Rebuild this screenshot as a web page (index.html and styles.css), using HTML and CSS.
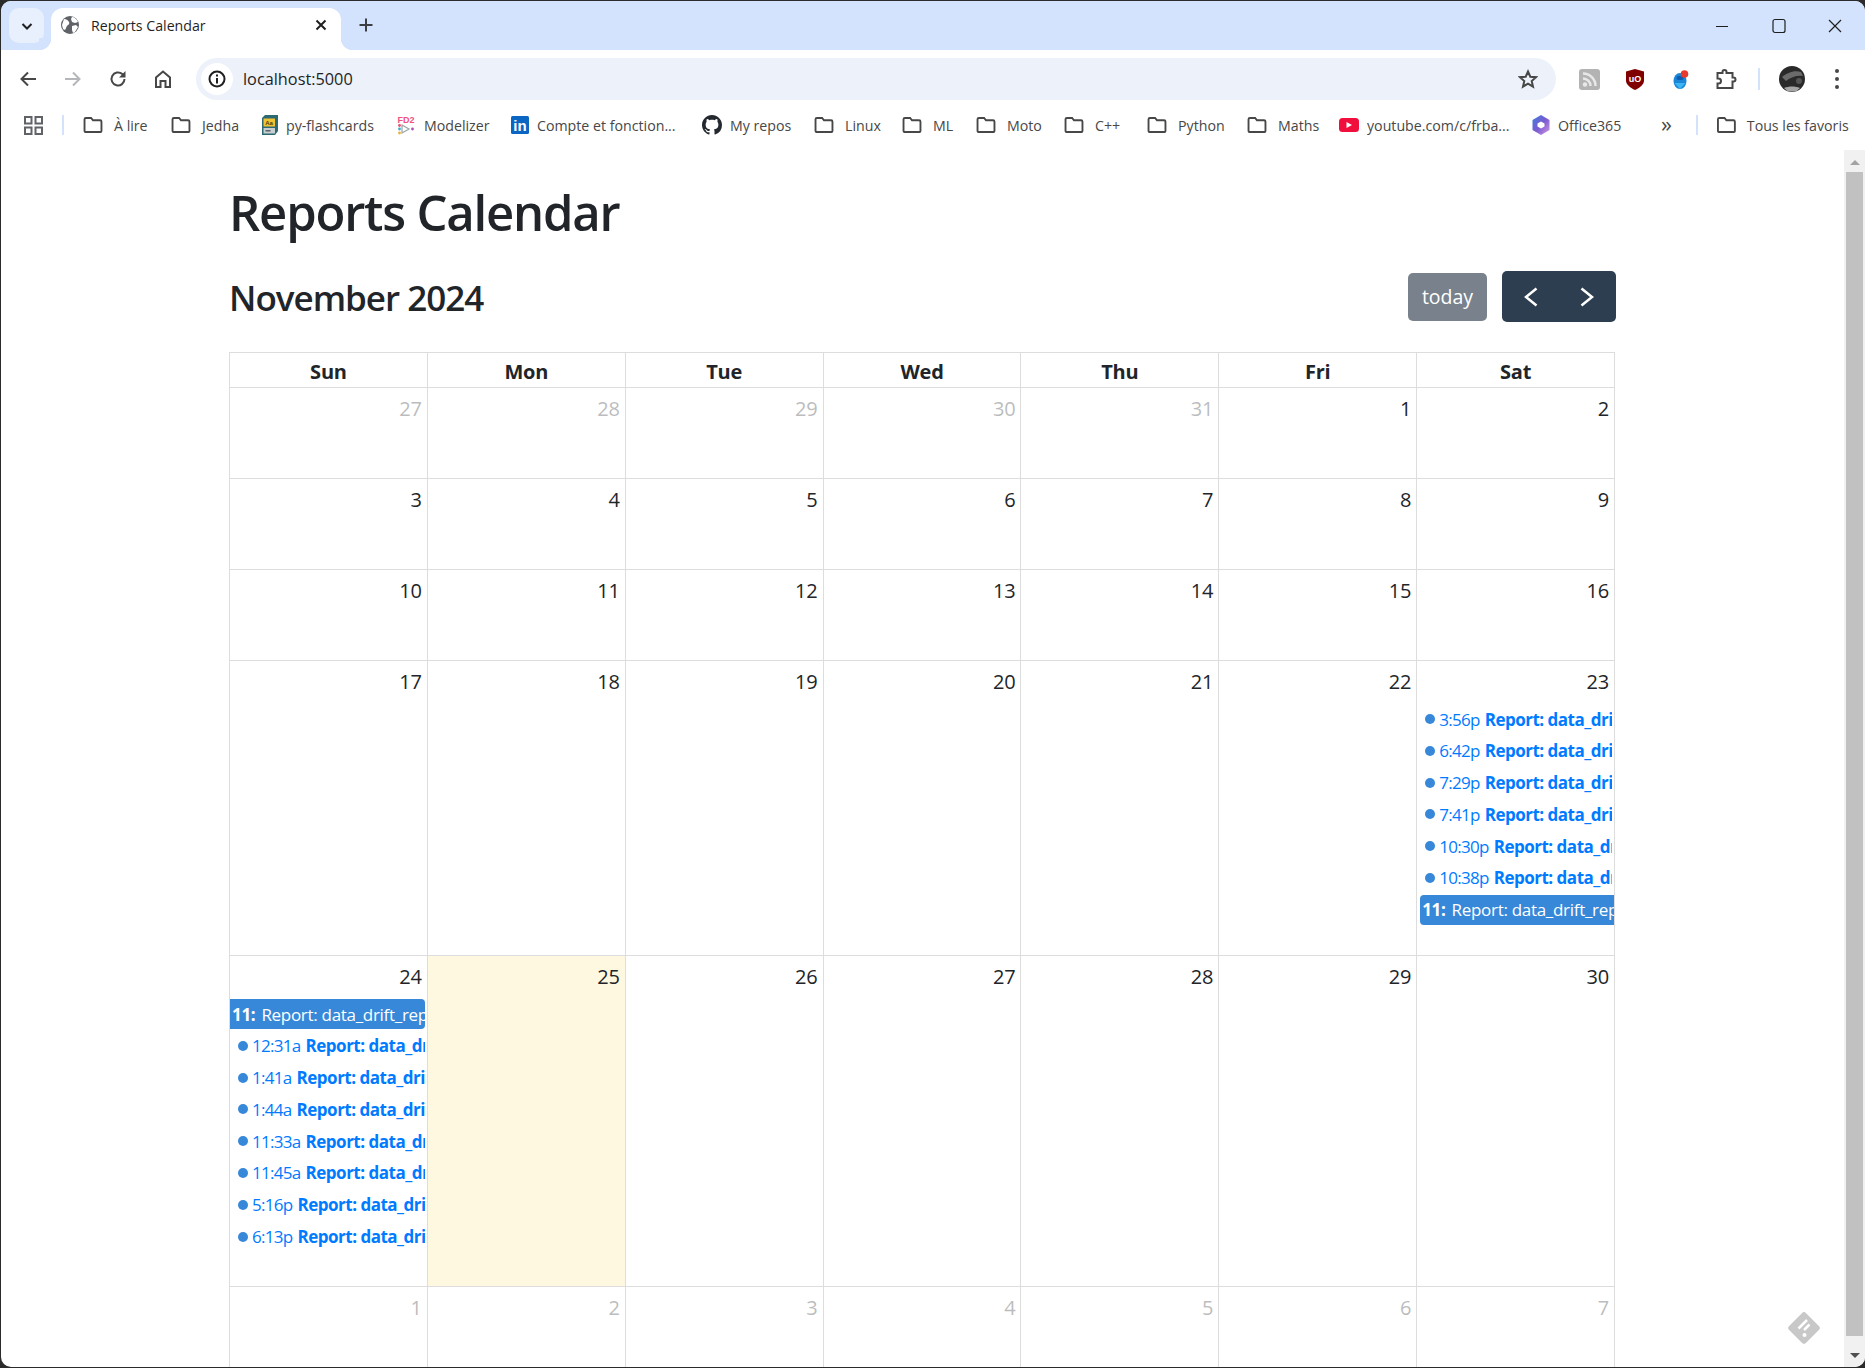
FILE: index.html
```html
<!DOCTYPE html>
<html lang="en">
<head>
    <meta charset="UTF-8">
    <title>Reports Calendar</title>
    <link rel="stylesheet" href="styles.css">
</head>
<body>
<div class="window">
    <div class="tabstrip">
        <button class="tab-search">
            <svg width="14" height="14" viewBox="0 0 14 14"><path d="M2.5 5l4.5 4.5L11.500 5" fill="none" stroke="#1f1f1f" stroke-width="2"/></svg>
        </button>
        <div class="tab">
            <svg class="tab-icon" width="18" height="18" viewBox="0 0 18 18"><circle cx="9" cy="9" r="9" fill="#5f6368"/><path d="M3 3c2 0 4 1 5 3s-1 3-2 4-1 3-2 4l-2-1-1-4zM11 1c2 0 5 2 6 5l-3 1-3-1-1-3zM11 10l4-1 2 2-3 5-2 1-1-3z" fill="#fff"/></svg>
            <span class="tab-title">Reports Calendar</span>
            <svg class="tab-close" width="14" height="14" viewBox="0 0 14 14"><path d="M2.500 2.500l9 9M11.500 2.500l-9 9" stroke="#1f1f1f" stroke-width="2"/></svg>
        </div>
        <svg class="new-tab" width="16" height="16" viewBox="0 0 16 16"><path d="M8 1.500v13M1.500 8h13" stroke="#3c4043" stroke-width="2"/></svg>
        <div class="window-controls">
            <svg width="14" height="14" viewBox="0 0 14 14"><path d="M1 7.500h12" stroke="#1f1f1f" stroke-width="1.200"/></svg>
            <svg width="14" height="16" viewBox="0 0 14 16"><rect x="1" y="1.500" width="12" height="13" rx="2" fill="none" stroke="#1f1f1f" stroke-width="1.200"/></svg>
            <svg width="14" height="14" viewBox="0 0 14 14"><path d="M1 1l12 12M13 1L1 13" stroke="#1f1f1f" stroke-width="1.200"/></svg>
        </div>
    </div>

    <div class="toolbar">
        <svg class="nav-icon" width="18" height="18" viewBox="0 0 18 18"><path d="M17 9H3M9 2.500L2.500 9 9 15.500" fill="none" stroke="#474747" stroke-width="2"/></svg>
        <svg class="nav-icon" width="18" height="18" viewBox="0 0 18 18"><path d="M1 9h14M9 2.500L15.500 9 9 15.500" fill="none" stroke="#b4b6b9" stroke-width="2"/></svg>
        <svg class="nav-icon" width="18" height="18" viewBox="0 0 18 18"><path d="M15.500 9A6.500 6.500 0 1 1 13.300 4.100L15.500 6" fill="none" stroke="#474747" stroke-width="2"/><path d="M16.500 1v6.500H10z" fill="#474747"/></svg>
        <svg class="nav-icon" width="18" height="18" viewBox="0 0 18 18"><path d="M2 17V7.500L9 1.500l7 6V17h-4.500v-6h-5v6z" fill="none" stroke="#474747" stroke-width="2"/></svg>
        <div class="omnibox">
            <span class="site-info">
                <svg width="18" height="18" viewBox="0 0 18 18"><circle cx="9" cy="9" r="7.500" fill="none" stroke="#1f1f1f" stroke-width="2"/><path d="M9 8v5.500M9 4.500v2" stroke="#1f1f1f" stroke-width="2"/></svg>
            </span>
            <span class="url">localhost:5000</span>
            <svg class="star" width="20" height="20" viewBox="0 0 20 20"><path d="M10 2.500l2.300 5.200 5.700.5-4.300 3.800 1.300 5.600-5-3-5 3 1.300-5.600L2 8.200l5.700-.5z" fill="none" stroke="#474747" stroke-width="2"/></svg>
        </div>
        <div class="extensions">
            <svg width="21" height="21" viewBox="0 0 21 21"><rect width="21" height="21" rx="3" fill="#b3b3b3"/><circle cx="6" cy="15.500" r="2.200" fill="#e8e8e8"/><path d="M4 9.500a7.500 7.500 0 0 1 7.500 7.500M4 4.500a12.500 12.500 0 0 1 12.500 12.500" fill="none" stroke="#e8e8e8" stroke-width="2.500"/></svg>
            <svg width="18" height="21" viewBox="0 0 18 21"><path d="M9 0l9 2.500v9c0 4-4.500 7.500-9 9.500-4.500-2-9-5.500-9-9.500v-9z" fill="#800000"/><text class="ublock-text" x="9" y="12.500" text-anchor="middle">uO</text></svg>
            <svg width="16" height="19" viewBox="0 0 16 19"><ellipse cx="7" cy="11" rx="6.500" ry="8" fill="#1a86d8"/><rect x="3.500" y="6" width="7" height="4" rx="2" fill="#0b5db0"/><path d="M1.500 13h11l-5.500 6z" fill="#3db5f2"/><circle cx="11.500" cy="4" r="3.800" fill="#e8392f"/></svg>
            <svg class="puzzle" width="21" height="20" viewBox="0 0 21 20"><path d="M1.500 4h5V3a2 2 0 0 1 4 0v1h6v4.500h1a2 2 0 0 1 0 4h-1V19h-15v-4.500h1a2.500 2.500 0 0 0 0-5h-1z" fill="none" stroke="#474747" stroke-width="2"/></svg>
        </div>
        <span class="toolbar-sep"></span>
        <svg class="avatar" width="26" height="26" viewBox="0 0 26 26"><circle cx="13" cy="13" r="13" fill="#2a2a2a"/><path d="M3 11c5-4 12-7 19-5l2 4c-6-1-12 1-17 5z" fill="#6b6b6b"/><path d="M5 22c5-2 11-2 16 0l-4 3.500H9z" fill="#a5a5a5"/><circle cx="20" cy="15" r="3" fill="#555"/></svg>
        <span class="kebab"><i></i><i></i><i></i></span>
    </div>

    <div class="bookmarks">
        <span class="bm"><svg width="19" height="19" viewBox="0 0 19 19"><g fill="none" stroke="#5f6368" stroke-width="2"><rect x="1" y="1" width="6.500" height="6.500"/><rect x="11.500" y="1" width="6.500" height="6.500"/><rect x="1" y="11.500" width="6.500" height="6.500"/><rect x="11.500" y="11.500" width="6.500" height="6.500"/></g></svg></span>
        <span class="bm-sep"></span>
        <span class="bm"><svg class="folder" viewBox="0 0 20 17"><use href="#folder-shape"/></svg>À lire</span>
        <span class="bm"><svg class="folder" viewBox="0 0 20 17"><use href="#folder-shape"/></svg>Jedha</span>
        <span class="bm bm-tight"><svg width="16" height="20" viewBox="0 0 16 20"><path d="M0 3L3 0h13v16l-3 4H0z" fill="#2b6a72"/><rect x="1.500" y="3.500" width="11.500" height="8" fill="#f2c230"/><text class="flash-text" x="7" y="10">Aa</text><rect x="1.500" y="13" width="11.500" height="5.500" fill="#c9ced1"/><rect x="3.500" y="15" width="5" height="1.500" fill="#5a6468"/></svg>py-flashcards</span>
        <span class="bm bm-tight"><svg width="20" height="20" viewBox="0 0 20 20"><text class="fd2-text" x="10" y="7.500" text-anchor="middle">FD2</text><g><path d="M6 10l7 4-7 4z" fill="none" stroke="#9aa5a8" stroke-width="1.200"/><circle cx="3.500" cy="10.500" r="1.400" fill="#e4526d"/><circle cx="3.500" cy="14" r="1.400" fill="#43a9c4"/><circle cx="3.500" cy="18" r="1.400" fill="#e8b33c"/><circle cx="16.500" cy="14" r="1.400" fill="#b04fb5"/></g></svg>Modelizer</span>
        <span class="bm bm-tight"><svg width="18" height="18" viewBox="0 0 18 18"><rect width="18" height="18" rx="1.500" fill="#0a66c2"/><text class="linkedin-text" x="9" y="15" text-anchor="middle">in</text></svg>Compte et fonction...</span>
        <span class="bm bm-tight"><svg width="20" height="20" viewBox="0 0 16 16"><path fill="#24292f" d="M8 0C3.580 0 0 3.580 0 8c0 3.540 2.290 6.530 5.470 7.590.4.070.55-.170.55-.380 0-.190-.010-.820-.010-1.490-2.010.370-2.530-.490-2.690-.940-.090-.230-.480-.940-.820-1.130-.280-.150-.680-.520-.010-.530.630-.010 1.080.580 1.230.820.720 1.210 1.870.870 2.330.660.070-.520.280-.870.510-1.070-1.780-.200-3.640-.890-3.640-3.950 0-.870.310-1.590.820-2.150-.080-.200-.360-1.020.080-2.120 0 0 .670-.210 2.200.820.640-.180 1.320-.270 2-.270s1.360.090 2 .270c1.530-1.040 2.200-.820 2.200-.820.440 1.100.160 1.920.080 2.120.510.560.820 1.270.820 2.150 0 3.070-1.870 3.750-3.650 3.950.290.250.540.730.540 1.480 0 1.070-.010 1.930-.010 2.200 0 .210.150.460.550.380A8.010 8.010 0 0 0 16 8c0-4.420-3.580-8-8-8z"/></svg>My repos</span>
        <span class="bm"><svg class="folder" viewBox="0 0 20 17"><use href="#folder-shape"/></svg>Linux</span>
        <span class="bm"><svg class="folder" viewBox="0 0 20 17"><use href="#folder-shape"/></svg>ML</span>
        <span class="bm"><svg class="folder" viewBox="0 0 20 17"><use href="#folder-shape"/></svg>Moto</span>
        <span class="bm"><svg class="folder" viewBox="0 0 20 17"><use href="#folder-shape"/></svg>C++</span>
        <span class="bm"><svg class="folder" viewBox="0 0 20 17"><use href="#folder-shape"/></svg>Python</span>
        <span class="bm"><svg class="folder" viewBox="0 0 20 17"><use href="#folder-shape"/></svg>Maths</span>
        <span class="bm bm-tight"><svg width="20" height="14" viewBox="0 0 20 14"><rect width="20" height="14" rx="3.500" fill="#f00f3c"/><path d="M7.500 4l5.500 3-5.500 3z" fill="#fff"/></svg>youtube.com/c/frba...</span>
        <span class="bm bm-tight"><svg width="18" height="20" viewBox="0 0 18 20"><defs><linearGradient id="o365" x1="0" y1="0" x2="1" y2="1"><stop offset="0" stop-color="#3b7de0"/><stop offset=".5" stop-color="#7a5bd0"/><stop offset="1" stop-color="#d29ae4"/></linearGradient></defs><path d="M9 0l8.500 5v10L9 20 .5 15V5z" fill="url(#o365)"/><path d="M9 6.500l3.500 2v3L9 13.500l-3.500-2v-3z" fill="#fff"/></svg>Office365</span>
        <span class="bm bm-more">»</span>
        <span class="bm-sep"></span>
        <span class="bm"><svg class="folder" viewBox="0 0 20 17"><use href="#folder-shape"/></svg>Tous les favoris</span>
    </div>

    <div class="viewport">
        <main class="container">
            <h1>Reports Calendar</h1>
            <div class="cal-toolbar">
                <h2>November 2024</h2>
                <div class="cal-buttons">
                    <button class="btn-today">today</button>
                    <div class="btn-nav">
                        <svg width="20" height="22" viewBox="0 0 20 22"><path d="M15.500 2.500L5 11l10.500 8.500" fill="none" stroke="#fff" stroke-width="2.500"/></svg>
                        <svg width="20" height="22" viewBox="0 0 20 22"><path d="M4.500 2.500L15 11 4.500 19.500" fill="none" stroke="#fff" stroke-width="2.500"/></svg>
                    </div>
                </div>
            </div>

            <div class="calendar" id="calendar"></div>
        </main>
        <svg class="feedly" width="32" height="32" viewBox="0 0 32 32"><rect x="4" y="4" width="24" height="24" rx="3" transform="rotate(45 16 16)" fill="#c8c8c8"/><path d="M19 8l-8.500 8.500M21.500 12.500l-5.500 5.500" stroke="#fff" stroke-width="2.500"/><circle cx="16.500" cy="23" r="2" fill="#fff"/></svg>
        <div class="scrollbar">
            <span class="arrow-up"></span>
            <span class="thumb"></span>
            <span class="arrow-down"></span>
        </div>
    </div>
</div>

<svg class="defs" width="0" height="0"><defs><path id="folder-shape" d="M1 15V2.500A1.500 1.500 0 0 1 2.500 1H8l2 2.500h7.500A1.500 1.500 0 0 1 19 5v10a1 1 0 0 1-1 1H2a1 1 0 0 1-1-1z" fill="none" stroke="#474747" stroke-width="2"/></defs></svg>

<script>
    const calendar = document.getElementById('calendar');
    const dayNames = ['Sun', 'Mon', 'Tue', 'Wed', 'Thu', 'Fri', 'Sat'];

    // Weeks of November 2024, numbers from other months are dimmed
    const weeks = [
        [27, 28, 29, 30, 31, 1, 2],
        [3, 4, 5, 6, 7, 8, 9],
        [10, 11, 12, 13, 14, 15, 16],
        [17, 18, 19, 20, 21, 22, 23],
        [24, 25, 26, 27, 28, 29, 30],
        [1, 2, 3, 4, 5, 6, 7]
    ];

    const events = {
        '3-6': [
            ['3:56p'], ['6:42p'], ['7:29p'], ['7:41p'], ['10:30p'], ['10:38p'],
            ['11:', 'block block-start']
        ],
        '4-0': [
            ['11:', 'block block-end'],
            ['12:31a'], ['1:41a'], ['1:44a'], ['11:33a'], ['11:45a'], ['5:16p'], ['6:13p']
        ]
    };

    function renderEvent(time, blockClass) {
        if (blockClass) {
            return `<div class="event ${blockClass}"><b>${time}</b> <span>Report: data_drift_report</span></div>`;
        }
        return `<div class="event dot-event"><i class="dot"></i><span class="time">${time}</span><b class="title">Report: data_drift_report</b></div>`;
    }

    let html = '<div class="week head">';
    dayNames.forEach((name) => {
        html += `<div class="head-cell">${name}</div>`;
    });
    html += '</div>';

    weeks.forEach((week, w) => {
        html += `<div class="week week-${w}">`;
        week.forEach((day, d) => {
            const other = w === 0 && day > 7 || w === 5;
            const today = w === 4 && d === 1;
            const list = events[`${w}-${d}`] || [];
            html += `<div class="day${today ? ' today' : ''}">
                <div class="day-num${other ? ' other' : ''}">${day}</div>
                <div class="day-events">${list.map((e) => renderEvent(e[0], e[1])).join('')}</div>
            </div>`;
        });
        html += '</div>';
    });
    calendar.innerHTML = html;
</script>
</body>
</html>
```

FILE: styles.css
```css
* {
    box-sizing: border-box;
}
html, body {
    height: 100%;
}
body {
    margin: 0;
    padding: 1px 0 1px 1px;
    background: #2b2b2b;
    font-family: "Open Sans", "Noto Sans", Arial, sans-serif;
    color: #212529;
    overflow: hidden;
}
.defs {
    display: block;
}
.window {
    height: 1366px;
    background: #fff;
    border-radius: 10px;
    overflow: hidden;
    display: flex;
    flex-direction: column;
}

/* tab strip */
.tabstrip {
    height: 49px;
    background: #d3e3fd;
    display: flex;
    align-items: flex-start;
    padding: 7px 0 0 8px;
    flex-shrink: 0;
}
.tab-search {
    width: 35px;
    height: 35px;
    border: none;
    border-radius: 10px;
    background: #e9f0fd;
    display: flex;
    align-items: center;
    justify-content: center;
    padding: 0;
}
.tab {
    position: relative;
    width: 290px;
    height: 42px;
    margin-left: 7px;
    background: #fff;
    border-radius: 12px 12px 0 0;
    display: flex;
    align-items: center;
    padding: 0 13px 8px 10px;
}
.tab::before, .tab::after {
    content: "";
    position: absolute;
    bottom: 0;
    width: 12px;
    height: 12px;
}
.tab::before {
    left: -12px;
    background: radial-gradient(circle at 0 0, #d3e3fd 12px, #fff 12.500px);
}
.tab::after {
    right: -12px;
    background: radial-gradient(circle at 100% 0, #d3e3fd 12px, #fff 12.500px);
}
.tab-title {
    flex: 1;
    margin-left: 12px;
    font-size: 14.200px;
    color: #1f1f1f;
    white-space: nowrap;
}
.new-tab {
    margin: 9px 0 0 17px;
}
.window-controls {
    margin-left: auto;
    display: flex;
    align-items: center;
    gap: 42.500px;
    padding: 10px 23px 0 0;
}

/* toolbar */
.toolbar {
    height: 50px;
    display: flex;
    align-items: center;
    padding: 8px 0 0 18px;
    flex-shrink: 0;
}
.nav-icon {
    margin-right: 27px;
}
.nav-icon:nth-child(4) {
    margin-right: 24px;
}
.omnibox {
    width: 1360px;
    height: 42px;
    background: #ecf1fa;
    border-radius: 21px;
    display: flex;
    align-items: center;
    padding: 0 18px 0 5px;
}
.site-info {
    width: 32px;
    height: 32px;
    background: #fff;
    border-radius: 50%;
    display: flex;
    align-items: center;
    justify-content: center;
}
.url {
    flex: 1;
    margin-left: 10px;
    font-size: 16.300px;
    color: #1f1f1f;
}
.extensions {
    display: grid;
    grid-template-columns: repeat(4, 45.500px);
    justify-items: center;
    align-items: center;
    margin-left: 11px;
}
.ublock-text {
    font: bold 9px "Liberation Sans", sans-serif;
    fill: #fff;
}
.toolbar-sep {
    width: 2px;
    height: 22px;
    margin-left: 9px;
    background: #d3e3fd;
}
.avatar {
    margin-left: 19px;
}
.kebab {
    margin-left: 30px;
    display: flex;
    flex-direction: column;
    gap: 4px;
}
.kebab i {
    width: 4px;
    height: 4px;
    border-radius: 50%;
    background: #474747;
}

/* bookmarks bar */
.bookmarks {
    height: 50px;
    display: grid;
    grid-template-columns: 38px 21px 88px 91px 134px 115px 191px 112px 88px 74px 88px 83px 100px 92px 193px 129px 35px 21px 131px;
    align-items: center;
    padding-left: 23px;
    flex-shrink: 0;
}
.bm {
    display: flex;
    align-items: center;
    gap: 11px;
    font-size: 14.200px;
    color: #474747;
    white-space: nowrap;
}
.bm-tight {
    gap: 8px;
}
.bm-more {
    font-size: 22px;
    line-height: 1;
    padding-bottom: 4px;
}
.bm-sep {
    width: 2px;
    height: 20px;
    background: #d3e3fd;
}
.folder {
    width: 20px;
    height: 16px;
    overflow: visible;
}
.fd2-text {
    font: bold 9px "Liberation Sans", sans-serif;
    fill: #f2507e;
}
.flash-text {
    font: bold 6px "Liberation Sans", sans-serif;
    fill: #4a3b10;
    text-anchor: middle;
}
.linkedin-text {
    font: bold 15px "Liberation Sans", sans-serif;
    fill: #fff;
}

/* page */
.viewport {
    position: relative;
    flex: 1;
    min-height: 0;
    display: flex;
    overflow: hidden;
}
.container {
    flex: 1;
    padding-left: 228px;
    padding-right: 229px;
    min-width: 0;
}
h1 {
    margin: 32px 0 0;
    font-size: 49px;
    font-weight: 600;
    line-height: 60px;
    letter-spacing: -1.200px;
}
.cal-toolbar {
    display: flex;
    justify-content: space-between;
    align-items: flex-start;
    margin-top: 29px;
}
h2 {
    margin: 0;
    padding-top: 4px;
    font-size: 35px;
    font-weight: 600;
    line-height: 46px;
    letter-spacing: -1px;
}
.cal-buttons {
    display: flex;
    align-items: center;
    gap: 15px;
    margin-right: -1px;
}
.btn-today {
    width: 79px;
    height: 48px;
    border: none;
    border-radius: 5px;
    background: #79828c;
    color: #fff;
    font: 19.500px "Open Sans", sans-serif;
    padding: 0;
}
.btn-nav {
    width: 114px;
    height: 51px;
    background: #2c3e50;
    border-radius: 5px;
    display: flex;
    align-items: center;
    justify-content: center;
    gap: 36px;
}

/* calendar grid */
.calendar {
    margin-top: 30px;
    border-top: 1px solid #ddd;
    border-left: 1px solid #ddd;
}
.week {
    display: grid;
    grid-template-columns: repeat(7, 1fr);
}
.week-0, .week-1, .week-2 {
    height: 91px;
}
.week-3 {
    height: 295px;
}
.week-4 {
    height: 331px;
}
.week-5 {
    height: 91px;
}
.head {
    height: 35px;
}
.head-cell {
    height: 35px;
    border-right: 1px solid #ddd;
    border-bottom: 1px solid #ddd;
    text-align: center;
    font-size: 20px;
    font-weight: 700;
    line-height: 37px;
    letter-spacing: -0.200px;
}
.day {
    border-right: 1px solid #ddd;
    border-bottom: 1px solid #ddd;
    min-width: 0;
    overflow: hidden;
}
.today {
    background: #fff8e0;
}
.day-num {
    height: 40px;
    padding: 6px 5px 0;
    text-align: right;
    font-size: 20px;
    line-height: 30px;
    letter-spacing: -0.200px;
}
.other {
    opacity: .3;
}
.day-events {
    display: flex;
    flex-direction: column;
    gap: 1.800px;
    padding-top: 3px;
}
.event {
    height: 30px;
    display: flex;
    align-items: center;
    font-size: 17px;
    white-space: nowrap;
    overflow: hidden;
}
.dot-event {
    margin: 0 2px 0 8px;
    color: #007bff;
}
.dot {
    flex-shrink: 0;
    width: 10px;
    height: 10px;
    margin-right: 4px;
    border-radius: 50%;
    background: #3788d8;
}
.time {
    flex-shrink: 0;
    margin-right: 5px;
    letter-spacing: -0.700px;
}
.title {
    font-weight: 700;
    letter-spacing: -0.500px;
}
.block {
    background: #3788d8;
    color: #fff;
    padding-left: 2px;
    gap: 6px;
    letter-spacing: -0.300px;
}
.block-start {
    margin-left: 3px;
    border-radius: 4px 0 0 4px;
}
.block-end {
    margin-right: 2px;
    border-radius: 0 4px 4px 0;
}

/* scrollbar and feedly badge */
.scrollbar {
    width: 21px;
    flex-shrink: 0;
    background: #f1f1f1;
    display: flex;
    flex-direction: column;
    align-items: center;
}
.arrow-up, .arrow-down {
    width: 0;
    height: 0;
    border-left: 5px solid transparent;
    border-right: 5px solid transparent;
}
.arrow-up {
    margin: 10px 0 7px;
    border-bottom: 5px solid #a3a3a3;
}
.arrow-down {
    margin: 17px 0 9px;
    border-top: 5px solid #505050;
}
.thumb {
    flex: 1;
    width: 17px;
    background: #c1c1c1;
}
.feedly {
    position: absolute;
    right: 45px;
    bottom: 23px;
}
```
